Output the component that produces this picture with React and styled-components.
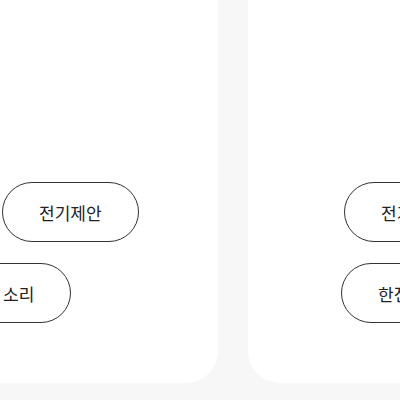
import styled, { createGlobalStyle } from "styled-components";

const GlobalStyle = createGlobalStyle`
    html, body {
        margin: 0;
        padding: 0;
        background: #f7f7f7;
    }
    * {
        box-sizing: border-box;
    }
`;

const Viewport = styled.div`
    width: 400px;
    height: 400px;
    overflow: hidden;
    background: #f7f7f7;
    font-family: "Noto Sans CJK KR", "Noto Sans", sans-serif;
`;

const Track = styled.div`
    display: flex;
    gap: 30px;
    transform: translateX(-182px);
`;

const Card = styled.section`
    flex: 0 0 400px;
    height: 423px;
    margin-top: -40px;
    background: #ffffff;
    border-radius: 32px;
    display: flex;
    flex-direction: column;
    justify-content: flex-end;
    gap: 21px;
    padding-bottom: 60px;
    overflow: hidden;
`;

const Row = styled.div`
    display: flex;
    gap: 20px;
    padding-left: ${(p) => p.$offset}px;
    white-space: nowrap;
`;

const Tag = styled.button`
    flex: 0 0 auto;
    height: 60px;
    padding: 0 36px;
    border: 1px solid #333333;
    border-radius: 30px;
    background: #ffffff;
    color: #222222;
    font-family: inherit;
    font-size: 17px;
    font-weight: 400;
    line-height: 1;
    cursor: pointer;
`;

const cards = [
    {
        id: "a",
        rows: [
            { offset: 184, tags: ["전기제안"] },
            { offset: 148, tags: ["소리"] },
        ],
    },
    {
        id: "b",
        rows: [
            { offset: 96, tags: ["전기제안"] },
            { offset: 93, tags: ["한전소식"] },
        ],
    },
];

export default function App() {
    return (
        <>
            <GlobalStyle />
            <Viewport>
                <Track>
                    {cards.map((card) => (
                        <Card key={card.id}>
                            {card.rows.map((row, i) => (
                                <Row key={i} $offset={row.offset}>
                                    {row.tags.map((t) => (
                                        <Tag key={t}>{t}</Tag>
                                    ))}
                                </Row>
                            ))}
                        </Card>
                    ))}
                </Track>
            </Viewport>
        </>
    );
}
